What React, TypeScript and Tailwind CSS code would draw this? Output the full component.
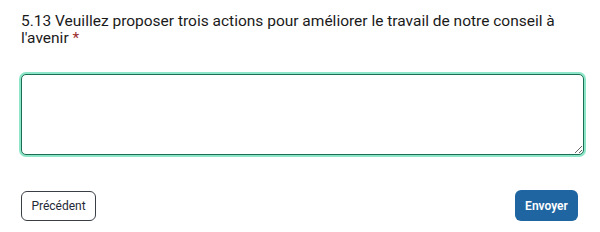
export default function App() {
  return (
    <div className="w-[600px] h-[232px] bg-white px-[21px] pt-[13px] font-['Roboto',sans-serif]">
      <label className="block text-[15.5px] leading-[17px] text-[#1a1a1a]">
        5.13 Veuillez proposer trois actions pour améliorer le travail de notre conseil à l'avenir{' '}
        <span className="text-[#9b2c2c]">*</span>
      </label>

      <textarea
        className="block mt-[27px] w-[563px] h-[81px] rounded-[5px] border border-[#1b6e55] outline-none ring-2 ring-[#8ee6c8] resize-y bg-white"
      />

      <div className="flex items-center justify-between mt-[35px] pr-[1px]">
        <button className="h-[30px] w-[75px] rounded-[6px] border border-[#3a3f47] bg-white text-[12px] font-normal text-[#1f2937]">
          Précédent
        </button>
        <button className="h-[31px] w-[63px] rounded-[6px] bg-[#1f65a1] text-[12px] font-semibold text-white">
          Envoyer
        </button>
      </div>
    </div>
  )
}
